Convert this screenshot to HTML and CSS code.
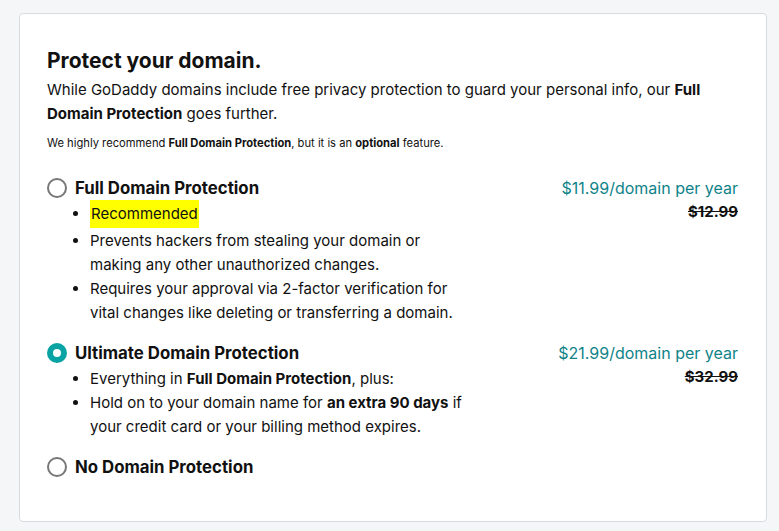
FILE: index.html
```html
<!DOCTYPE html>
<html>
<head>
<meta charset="utf-8">
<link rel="stylesheet" href="styles.css">
</head>
<body>
<div class="card">
  <h1 class="title">Protect your domain.</h1>
  <p class="lead">While GoDaddy domains include free privacy protection to guard your personal info, our <b>Full Domain Protection</b> goes further.</p>
  <p class="note">We highly recommend <b>Full Domain Protection</b>, but it is an <b>optional</b> feature.</p>

  <div class="options">
    <div class="option">
      <div class="opt-main">
        <div class="opt-head"><span class="radio"></span><span class="opt-name">Full Domain Protection</span></div>
        <ul class="bullets">
          <li class="tall"><span class="hl">Recommended</span></li>
          <li>Prevents hackers from stealing your domain or making any other unauthorized changes.</li>
          <li>Requires your approval via 2-factor verification for vital changes like deleting or transferring a domain.</li>
        </ul>
      </div>
      <div class="price">
        <div class="now">$11.99/domain per year</div>
        <div class="was">$12.99</div>
      </div>
    </div>

    <div class="option">
      <div class="opt-main">
        <div class="opt-head"><span class="radio checked"></span><span class="opt-name">Ultimate Domain Protection</span></div>
        <ul class="bullets">
          <li>Everything in <b>Full Domain Protection</b>, plus:</li>
          <li>Hold on to your domain name for <b>an extra 90 days</b> if your credit card or your billing method expires.</li>
        </ul>
      </div>
      <div class="price">
        <div class="now">$21.99/domain per year</div>
        <div class="was">$32.99</div>
      </div>
    </div>

    <div class="option">
      <div class="opt-main">
        <div class="opt-head"><span class="radio"></span><span class="opt-name">No Domain Protection</span></div>
      </div>
    </div>
  </div>
</div>
</body>
</html>
```

FILE: styles.css
```css
html, body {
  margin: 0;
  padding: 0;
  background: #f5f6f8;
}
body {
  font-family: "Inter", "Noto Sans", sans-serif;
  color: #111111;
  padding: 13px 12px 9px 19px;
}
.card {
  box-sizing: border-box;
  width: 748px;
  height: 509px;
  background: #ffffff;
  border: 1px solid #d6dbe0;
  border-radius: 4px;
  padding: 32px 28px 0 27px;
}
.title {
  margin: 0;
  font-size: 21px;
  line-height: 30px;
  font-weight: 700;
}
.lead {
  margin: 2px 0 0;
  font-size: 15px;
  line-height: 24px;
}
.lead b, .note b, .bullets b { font-weight: 700; }
.note {
  margin: 9px 0 0;
  font-size: 11.2px;
  line-height: 16px;
}
.options {
  display: flex;
  flex-direction: column;
  gap: 14px;
  margin-top: 23px;
}
.option {
  display: flex;
  justify-content: space-between;
}
.opt-head {
  display: flex;
  align-items: center;
  gap: 8px;
  height: 28px;
}
.radio {
  box-sizing: border-box;
  width: 20px;
  height: 20px;
  border-radius: 50%;
  border: 2px solid #777777;
  background: #fff;
}
.radio.checked {
  border: 6px solid #09a3a3;
}
.opt-name {
  font-size: 16.8px;
  line-height: 24px;
  font-weight: 700;
}
.bullets {
  margin: 0;
  padding: 0 0 0 43px;
  width: 380px;
  font-size: 15px;
  line-height: 24px;
}
.bullets li.tall {
  height: 27px;
}
.hl {
  display: inline-block;
  background: #ffff00;
  padding: 0 1px;
  line-height: 24px;
  height: 28px;
  vertical-align: top;
  margin-top: -2px;
  padding-top: 2px;
  box-sizing: border-box;
}
.price {
  text-align: right;
  font-size: 16px;
  line-height: 24px;
  padding-top: 2px;
}
.now { color: #0f8389; }
.was {
  font-weight: 700;
  font-size: 15px;
  text-decoration: line-through;
}
```
